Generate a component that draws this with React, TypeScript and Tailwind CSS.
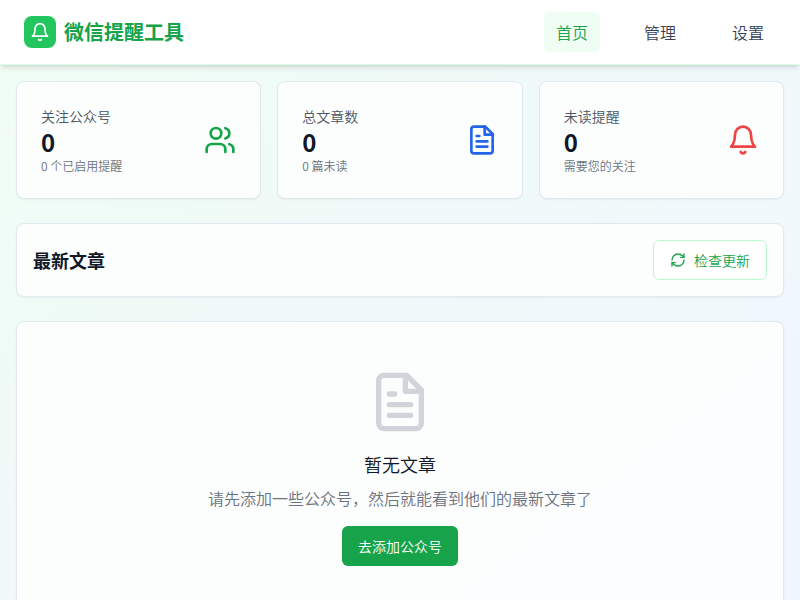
import { RefreshCw, Users } from 'lucide-react';
import type { ReactNode } from 'react';

const navItems = [
  { label: '首页', active: true },
  { label: '管理', active: false },
  { label: '设置', active: false },
];

function Icon({ className, children }: { className: string; children: ReactNode }) {
  return (
    <svg
      className={className}
      viewBox="0 0 24 24"
      fill="none"
      stroke="currentColor"
      strokeWidth="2"
      strokeLinecap="round"
      strokeLinejoin="round"
      aria-hidden="true"
    >
      {children}
    </svg>
  );
}

function BellIcon({ className }: { className: string }) {
  return (
    <Icon className={className}>
      <path d="M6 8a6 6 0 0 1 12 0c0 7 3 9 3 9H3s3-2 3-9" />
      <path d="M10.3 21a1.94 1.94 0 0 0 3.4 0" />
    </Icon>
  );
}

function ArticleIcon({ className }: { className: string }) {
  return (
    <Icon className={className}>
      <path d="M14.5 2H6a2 2 0 0 0-2 2v16a2 2 0 0 0 2 2h12a2 2 0 0 0 2-2V7.5L14.5 2z" />
      <polyline points="14 2 14 8 20 8" />
      <path d="M16 13H8" />
      <path d="M16 17H8" />
      <path d="M10 9H8" />
    </Icon>
  );
}

function StatCard({ title, value, note, icon }: { title: string; value: number; note: string; icon: ReactNode }) {
  return (
    <section className="flex items-center justify-between rounded-lg border border-[#e2e8f0] bg-white/80 p-6 shadow-xs">
      <div>
        <p className="text-sm text-[#4b5563]">{title}</p>
        <p className="text-2xl font-bold text-[#111827]">{value}</p>
        <p className="text-xs text-[#6b7280]">{note}</p>
      </div>
      {icon}
    </section>
  );
}

export default function App() {
  return (
    <div className="min-h-screen bg-linear-to-br/srgb from-[#f0fdf4] to-[#eff6ff] font-['Noto_Sans_CJK_SC',sans-serif] font-[350] text-[#020817]">
      <header className="border-b border-[#dcfce7] bg-white shadow-md">
        <div className="mx-auto flex h-16 max-w-7xl items-center justify-between px-6">
          <div className="flex items-center gap-2">
            <div className="flex size-8 items-center justify-center rounded-lg bg-[#22c55e] text-white">
              <BellIcon className="size-5" />
            </div>
            <h1 className="text-xl font-bold text-[#16a34a]">微信提醒工具</h1>
          </div>
          <nav className="flex gap-8">
            {navItems.map((item) => (
              <a
                key={item.label}
                href="#"
                className={item.active ? 'rounded-md bg-[#f0fdf4] px-3 py-2 text-[#16a34a]' : 'rounded-md px-3 py-2 text-[#374151]'}
              >
                {item.label}
              </a>
            ))}
          </nav>
        </div>
      </header>
      <main className="mx-auto flex max-w-7xl flex-col gap-6 p-4">
        <div className="grid grid-cols-3 gap-4">
          <StatCard title="关注公众号" value={0} note="0 个已启用提醒" icon={<Users className="size-8 text-[#16a34a]" />} />
          <StatCard title="总文章数" value={0} note="0 篇未读" icon={<ArticleIcon className="size-8 text-[#2563eb]" />} />
          <StatCard title="未读提醒" value={0} note="需要您的关注" icon={<BellIcon className="size-8 text-[#ef4444]" />} />
        </div>
        <section className="flex items-center justify-between rounded-lg border border-[#e2e8f0] bg-white/80 p-4 shadow-xs">
          <h2 className="text-lg font-semibold text-[#111827]">最新文章</h2>
          <button className="flex h-10 items-center gap-2 rounded-md border border-[#bbf7d0] bg-white px-4 text-sm text-[#16a34a]">
            <RefreshCw className="size-4" />
            检查更新
          </button>
        </section>
        <section className="flex flex-col items-center rounded-lg border border-[#e2e8f0] bg-white/80 p-12 text-center shadow-xs">
          <ArticleIcon className="mb-4 size-16 text-[#d1d5db]" />
          <h3 className="mb-2 text-lg text-[#111827]">暂无文章</h3>
          <p className="mb-4 text-[#6b7280]">请先添加一些公众号，然后就能看到他们的最新文章了</p>
          <button className="h-10 rounded-md bg-[#16a34a] px-4 text-sm text-white">去添加公众号</button>
        </section>
      </main>
    </div>
  );
}
